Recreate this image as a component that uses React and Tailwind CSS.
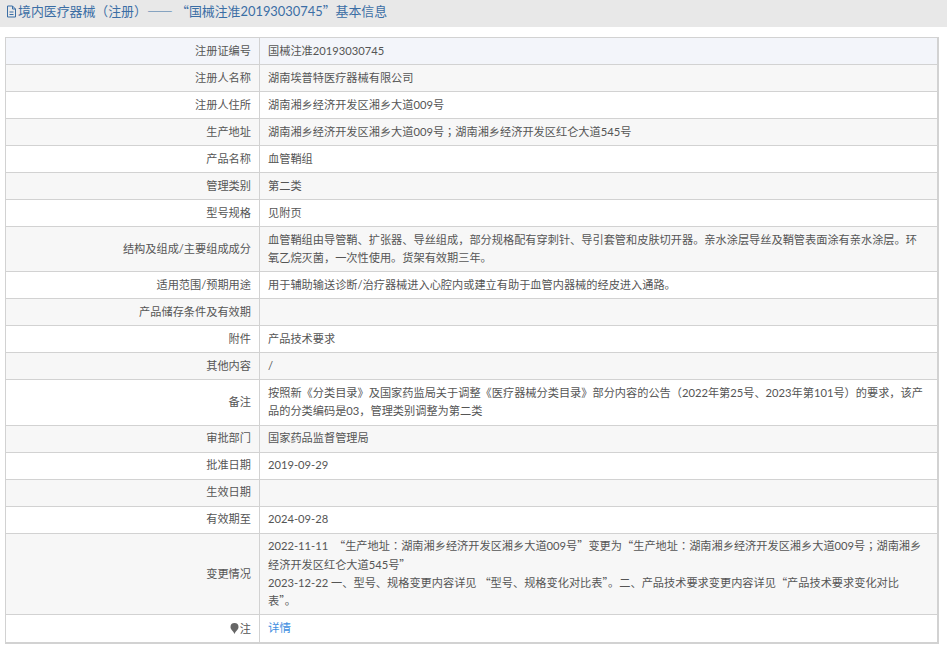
const FONT = "font-['Lato','Noto_Sans_CJK_SC',sans-serif]"

const ROWS = [
  ['注册证编号', '国械注准20193030745'],
  ['注册人名称', '湖南埃普特医疗器械有限公司'],
  ['注册人住所', '湖南湘乡经济开发区湘乡大道009号'],
  ['生产地址', '湖南湘乡经济开发区湘乡大道009号；湖南湘乡经济开发区红仑大道545号'],
  ['产品名称', '血管鞘组'],
  ['管理类别', '第二类'],
  ['型号规格', '见附页'],
  ['结构及组成/主要组成成分', '血管鞘组由导管鞘、扩张器、导丝组成，部分规格配有穿刺针、导引套管和皮肤切开器。亲水涂层导丝及鞘管表面涂有亲水涂层。环氧乙烷灭菌，一次性使用。货架有效期三年。'],
  ['适用范围/预期用途', '用于辅助输送诊断/治疗器械进入心腔内或建立有助于血管内器械的经皮进入通路。'],
  ['产品储存条件及有效期', ''],
  ['附件', '产品技术要求'],
  ['其他内容', '/'],
  ['备注', '按照新《分类目录》及国家药监局关于调整《医疗器械分类目录》部分内容的公告（2022年第25号、2023年第101号）的要求，该产品的分类编码是03，管理类别调整为第二类'],
  ['审批部门', '国家药品监督管理局'],
  ['批准日期', '2019-09-29'],
  ['生效日期', ''],
  ['有效期至', '2024-09-28'],
  ['变更情况', '2022-11-11\u00a0 “生产地址：湖南湘乡经济开发区湘乡大道009号”变更为“生产地址：湖南湘乡经济开发区湘乡大道009号；湖南湘乡经济开发区红仑大道545号”\n2023-12-22 一、型号、规格变更内容详见 “型号、规格变化对比表”。二、产品技术要求变更内容详见“产品技术要求变化对比表”。'],
]

// quotes and dashes come out full width in the CJK font, Lato makes them too narrow.
// the TC cut has the centred colon and semicolon of the reference.
// leading-[0] so the other font can't stretch the line box
function wide(text) {
  return text.split(/([“”—：；])/).map((part, i) => {
    if (i % 2 === 0) return part
    const tc = part === '：' || part === '；'
    return (
      <span
        key={i}
        lang={tc ? 'zh-TW' : 'zh-CN'}
        className={tc ? "leading-[0] font-['Noto_Sans_CJK_TC',sans-serif]" : "leading-[0] font-['Noto_Sans_CJK_SC',sans-serif]"}
      >
        {part}
      </span>
    )
  })
}

function rowBg(i) {
  if (i === 0) return 'bg-[#f3f5fa]'
  return i % 2 ? 'bg-[#f7f7f7]' : 'bg-white'
}

function Row({ label, value, index }) {
  return (
    <div className={`flex border-b border-[#d2d2d2] ${rowBg(index)}`}>
      <div className="w-[254px] shrink-0 flex items-center justify-end border-r border-[#d2d2d2] pr-[8px]">
        {label}
      </div>
      <div className="flex-1 min-w-0 min-h-[26px] pl-[8px] pr-[14px] py-[3.85px] whitespace-pre-line break-all">{wide(value)}</div>
    </div>
  )
}

export default function App() {
  return (
    <div lang="zh-CN" className={`w-[947px] h-[648px] overflow-hidden bg-white text-[11.2px] leading-[18.3px] text-[#555] ${FONT}`}>
      <div className="h-[27px] bg-[#e8e8e8] flex items-center pl-[6px] pb-[4px] text-[12.9px] text-[#3b6ea5]">
        <svg className="w-[11px] h-[13px] shrink-0 mr-[1px]" viewBox="0 0 11 13" fill="none" stroke="currentColor">
          <path d="M1.500 1h5l3 3v8h-8z" />
          <path d="M6.500 1v3h3M3.500 7h4M3.500 9.500h4" />
        </svg>
        <span>{wide('境内医疗器械（注册）—— “国械注准20193030745”基本信息')}</span>
      </div>
      <div className="ml-[5px] mt-[10px] w-[934px] border-l border-t border-r-2 border-[#d2d2d2]">
        {ROWS.map(([label, value], i) => (
          <Row key={label} label={label} value={value} index={i} />
        ))}
        <div className="flex border-b-2 border-[#d2d2d2] bg-white">
          <div className="w-[254px] shrink-0 flex items-center justify-end border-r border-[#d2d2d2] pr-[8px] min-h-[27px]">
            <svg className="w-[9px] h-[11px] mr-[1px]" viewBox="0 0 9 11" fill="#666">
              <path d="M4.500 0a4 4 0 0 1 4 4c0 2.500-2.500 3.500-4 7-1.500-3.500-4-4.500-4-7a4 4 0 0 1 4-4z" />
            </svg>
            <span>注</span>
          </div>
          <div className="flex-1 pl-[8px] py-[4px] text-[#3f8fdf] text-[11.5px]">详情</div>
        </div>
      </div>
    </div>
  )
}
